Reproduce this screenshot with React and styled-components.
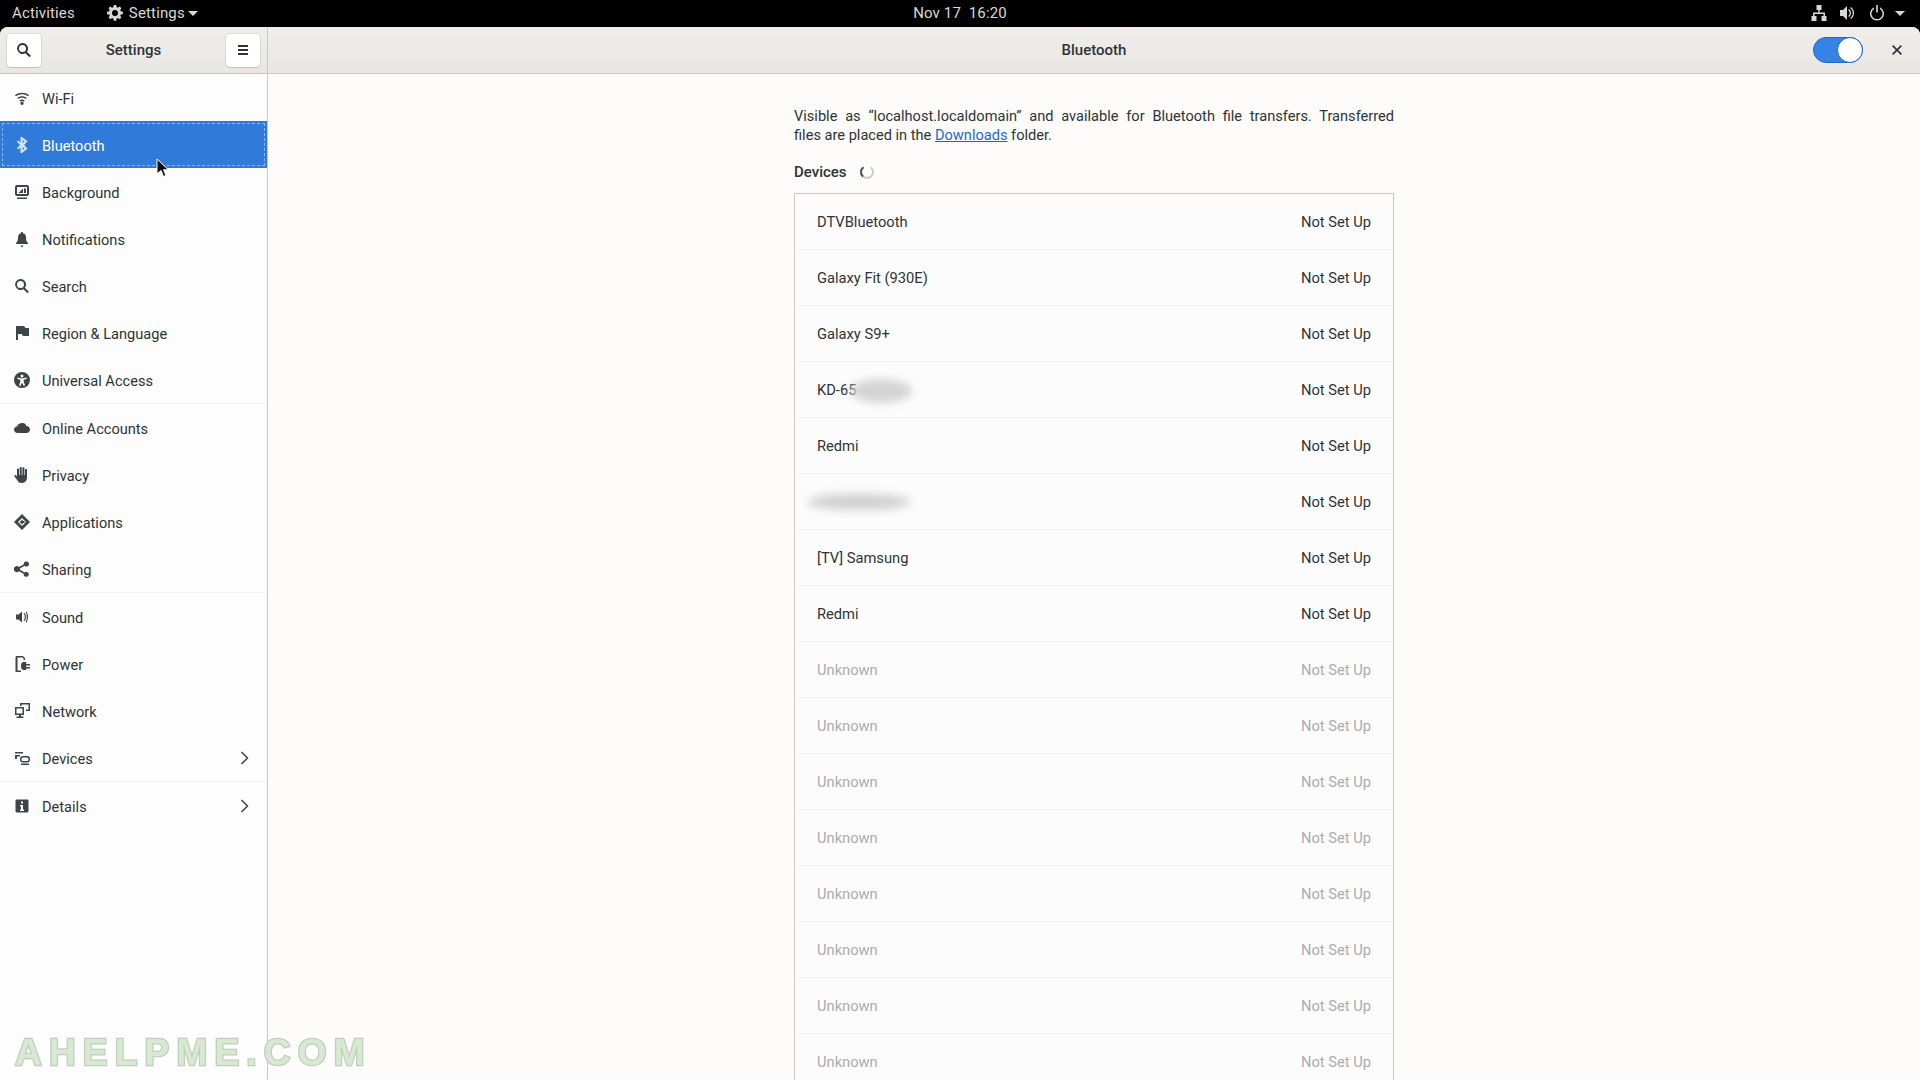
import React from "react";
import styled, { createGlobalStyle } from "styled-components";

const Global = createGlobalStyle`
  html, body { margin: 0; padding: 0; background: #000; }
  body { font-family: Roboto, "Noto Sans", sans-serif; font-size: 15px; color: #2e3436; }
  #root { width: 1920px; height: 1080px; overflow: hidden; }
`;

const Screen = styled.div`
  position: relative;
  width: 1920px;
  height: 1080px;
  display: flex;
  flex-direction: column;
  overflow: hidden;
  background: #000;
`;

const TopBar = styled.div`
  height: 27px;
  flex: none;
  display: grid;
  grid-template-columns: 1fr auto 1fr;
  align-items: center;
  padding: 0 12px 1px;
  box-sizing: border-box;
  color: #d8d8d6;
  font-size: 15px;
  letter-spacing: 0.15px;
`;
const TopLeft = styled.div`
  display: flex;
  align-items: center;
`;
const Activities = styled.span`
  margin-right: 32px;
`;
const AppMenu = styled.span`
  display: flex;
  align-items: center;
  gap: 6px;
`;
const Clock = styled.div`
  word-spacing: 0;
`;
const Tray = styled.div`
  display: flex;
  align-items: center;
  justify-content: flex-end;
  gap: 13px;
  padding-right: 3px;
`;
const TrayArrow = styled.svg`
  width: 10px;
  height: 16px;
  fill: #d8d8d6;
  flex: none;
  margin-left: -3px;
`;

const Window = styled.div`
  flex: 1;
  min-height: 0;
  display: flex;
  flex-direction: column;
  border-radius: 8px 8px 0 0;
  overflow: hidden;
  background: #fdfcfb;
`;
const Header = styled.header`
  height: 47px;
  flex: none;
  display: flex;
  background: linear-gradient(#f0eeeb, #e9e7e3);
  border-bottom: 1px solid #cdc7c2;
  box-sizing: border-box;
`;
const HeaderLeft = styled.div`
  width: 268px;
  flex: none;
  box-sizing: border-box;
  border-right: 1px solid #cdc7c2;
  display: flex;
  align-items: center;
  justify-content: space-between;
  padding: 0 7px;
`;
const HeaderRight = styled.div`
  flex: 1;
  position: relative;
  display: flex;
  align-items: center;
  justify-content: center;
`;
const HeaderTitle = styled.span`
  font-weight: 500;
  font-size: 15px;
  color: #2e3436;
  padding-bottom: 1px;
`;
const ToolButton = styled.div`
  width: 34px;
  height: 33px;
  box-sizing: border-box;
  border-radius: 4px;
  background: #fff;
  box-shadow: 0 1px 1px rgba(0, 0, 0, 0.12), 0 0 0 1px rgba(205, 199, 194, 0.45);
  display: flex;
  align-items: center;
  justify-content: center;
`;
const HeaderActions = styled.div`
  position: absolute;
  right: 0;
  top: 0;
  bottom: 0;
  display: flex;
  align-items: center;
  gap: 24px;
  padding-right: 13px;
`;
const Toggle = styled.div`
  width: 50px;
  height: 26px;
  box-sizing: border-box;
  border-radius: 13px;
  background: #3584e4;
  border: 1px solid #1b6acb;
  position: relative;
`;
const Knob = styled.div`
  position: absolute;
  right: -1px;
  top: -1px;
  width: 26px;
  height: 26px;
  box-sizing: border-box;
  border-radius: 50%;
  background: #fff;
  border: 1px solid #1b6acb;
`;
const CloseBox = styled.div`
  width: 20px;
  height: 20px;
  display: flex;
  align-items: center;
  justify-content: center;
`;

const Body = styled.div`
  flex: 1;
  min-height: 0;
  display: flex;
`;
const Sidebar = styled.nav`
  width: 268px;
  flex: none;
  box-sizing: border-box;
  border-right: 1px solid #cdc7c2;
  background: #fdfdfd;
`;
const NavRow = styled.div`
  height: 47px;
  box-sizing: border-box;
  display: flex;
  align-items: center;
  padding: 0 15px 0 14px;
  gap: 12px;
  color: ${(p) => (p.$active ? "#fff" : "#2e3436")};
  background: ${(p) => (p.$active ? "#307bd9" : "transparent")};
  font-size: 14.6px;
  position: relative;
  ${(p) => (p.$separated ? "border-bottom: 1px solid #f2f1f0; height: 48px;" : "")}
  ${(p) => (p.$active ? "outline: 1px dashed rgba(255,255,255,0.45); outline-offset: -3px;" : "")}
`;
const NavIcon = styled.svg`
  width: 16px;
  height: 16px;
  flex: none;
  fill: ${(p) => (p.$active ? "#cfe3fa" : "#3d4548")};
`;
const NavLabel = styled.span`
  flex: 1;
  padding-top: 2px;
`;
const Chevron = styled.svg`
  width: 16px;
  height: 16px;
  flex: none;
`;

const Main = styled.main`
  flex: 1;
  min-width: 0;
  display: flex;
  justify-content: center;
  background: #fdfcfb;
  overflow: hidden;
`;
const Column = styled.div`
  width: 600px;
  padding-top: 33px;
`;
const Intro = styled.div`
  font-size: 14.6px;
  line-height: 19px;
`;
const IntroFirstLine = styled.div`
  text-align: justify;
  text-align-last: justify;
  white-space: nowrap;
`;
const IntroLink = styled.span`
  color: #1b6acb;
  text-decoration: underline;
`;
const SectionHead = styled.div`
  display: flex;
  align-items: center;
  gap: 12px;
  margin-top: 17px;
  height: 19px;
  font-weight: 500;
  font-size: 15px;
`;
const DeviceList = styled.div`
  margin-top: 12px;
  border: 1px solid #cdc7c2;
  background: #fcfcfc;
`;
const DeviceRow = styled.div`
  height: 56px;
  box-sizing: border-box;
  border-bottom: 1px solid #f5f4f3;
  display: flex;
  align-items: center;
  justify-content: space-between;
  padding: 0 22px;
  font-size: 14.7px;
  color: ${(p) => (p.$dim ? "#a9adae" : "#2e3436")};
  position: relative;
`;
const DeviceName = styled.span`
  position: relative;
`;
const Smudge = styled.div`
  position: absolute;
  left: ${(p) => p.$left}px;
  top: ${(p) => p.$top}px;
  width: ${(p) => p.$w}px;
  height: ${(p) => p.$h}px;
  border-radius: 50%;
  background: ${(p) => p.$color};
  filter: blur(${(p) => p.$blur}px);
`;

const Cursor = styled.svg`
  position: absolute;
  left: 156px;
  top: 158px;
  width: 14px;
  height: 20px;
`;
const Watermark = styled.div`
  position: absolute;
  left: 15px;
  top: 1032px;
  font-family: "Liberation Sans", sans-serif;
  font-weight: 700;
  font-size: 37px;
  line-height: 42px;
  letter-spacing: 7.2px;
  color: #d6e8d0;
  -webkit-text-stroke: 2.5px #bccdb7;
  paint-order: stroke fill;
  opacity: 0.95;
  white-space: nowrap;
`;

const paths = {
  wifi: (
    <>
      <path d="M8 11.500a1.700 1.700 0 1 1 0 3.400 1.700 1.700 0 0 1 0-3.400z" />
      <path d="M1 5.200C3 3.600 5.400 2.800 8 2.800s5 .8 7 2.400l-.9 1.100C12.400 5 10.300 4.200 8 4.200S3.600 5 1.900 6.300z" />
      <path d="M3.200 7.900C4.600 6.900 6.200 6.300 8 6.300s3.400.6 4.800 1.600l-.9 1.100C10.800 8.200 9.500 7.700 8 7.700s-2.800.5-3.900 1.300z" />
      <path d="M5.300 10.400C6.100 9.900 7 9.600 8 9.600s1.900.3 2.700.8l-.9 1.100C9.300 11.200 8.700 11 8 11s-1.300.2-1.800.5z" />
    </>
  ),
  bluetooth: (
    <path fillRule="evenodd" d="M5.500 0h1.500L12.500 4.300 9.200 8l3.300 3.700L7 16H5.500V10.500L3.300 12.600 1.900 11.200 5 8 1.900 4.800l1.400-1.400L5.500 5.500zM7.600 3v3l1.900-1.500zM7.600 10v3l1.900-1.500z" transform="translate(1 0)" />
  ),
  background: (
    <path fillRule="evenodd" d="M3 1h10a2 2 0 0 1 2 2v7a2 2 0 0 1-2 2H3a2 2 0 0 1-2-2V3a2 2 0 0 1 2-2zm0 2v7h10V3zM9 4.500V9H4.500zM10 4.500h2V9h-2zM3 13.500h10V15H3z" />
  ),
  bell: (
    <path d="M8 1c.6 0 1 .4 1 1v.3c2 .5 3 2 3 4.200 0 3 .6 4.200 2 5.500v1H2v-1c1.400-1.300 2-2.500 2-5.500 0-2.200 1-3.700 3-4.200V2c0-.6.400-1 1-1zM6.500 14.500h3C9.300 15.400 8.700 16 8 16s-1.300-.6-1.500-1.500z" />
  ),
  search: (
    <path fillRule="evenodd" d="M6.500 1a5.500 5.500 0 0 1 4.400 8.800l4 4-1.400 1.400-4-4A5.500 5.500 0 1 1 6.500 1zm0 2a3.500 3.500 0 1 0 0 7 3.500 3.500 0 0 0 0-7z" />
  ),
  flag: <path d="M2 1h8l1.500 2H15v8H9l-1.500-2H4v6H2z" />,
  access: (
    <path fillRule="evenodd" d="M8 0a8 8 0 1 1 0 16A8 8 0 0 1 8 0zm0 2.500A1.500 1.500 0 1 0 8 5.500 1.500 1.500 0 0 0 8 2.500zM3.500 5.500l-.4 1.300 3.200 1v2L5 13.500l1.300.5L8 10.500l1.700 3.500 1.300-.5-1.300-3.700v-2l3.200-1-.4-1.300L8 6.500z" />
  ),
  cloud: (
    <path d="M8.500 3a4 4 0 0 1 3.800 3A3.500 3.500 0 0 1 16 9.500c0 1.700-1.400 3.500-3.500 3.500h-9C1.500 13 0 11.500 0 9.700 0 8 1.300 6.700 3 6.500 3.700 4.500 5.500 3 8.500 3z" />
  ),
  hand: (
    <path d="M4 1.500c.6 0 1 .4 1 1V8h.7V1c0-.6.400-1 1-1s1 .4 1 1v7h.7V1.200c0-.6.400-1 1-1s1 .4 1 1V8h.6V3c0-.6.400-1 1-1s1 .4 1 1v7.500c0 3-2 5.500-5 5.500-2.500 0-3.600-.7-4.500-2.500L.5 9.500c-.3-.6 0-1.200.5-1.500s1.100 0 1.400.5L3 9.700V2.500c0-.6.400-1 1-1z" />
  ),
  apps: (
    <path fillRule="evenodd" d="M8 0l8 8-8 8-8-8zM8 4L4 8l4 4 4-4zM8 5.500l1 1.500h1.500v2H9l-1 1.500L6.500 9 5.500 8l1.500-1z" />
  ),
  share: (
    <path d="M12.500 0a2.500 2.500 0 1 1-1.900 4.100L6 6.900c.1.400.1.800 0 1.200l4.600 2.800a2.500 2.500 0 1 1-.8 1.500L5 9.600a3 3 0 1 1 0-4.200l4.800-2.800A2.500 2.500 0 0 1 12.500 0z" transform="translate(0 .6)" />
  ),
  sound: (
    <>
      <path d="M2 5.500h2.500L8 2.500v11l-3.500-3H2z" />
      <path d="M9.500 4.500l.9-.6c1 1.100 1.600 2.500 1.600 4.100s-.6 3-1.600 4.100l-.9-.6c.8-.9 1.300-2.100 1.300-3.500S10.300 5.400 9.500 4.500z" />
      <path d="M11.500 3l.9-.6C13.400 3.900 14 5.900 14 8s-.6 4.100-1.600 5.600l-.9-.6c.9-1.400 1.300-3.100 1.300-5s-.4-3.600-1.300-5z" />
    </>
  ),
  power: (
    <path fillRule="evenodd" d="M3 0h6l2 2v2H9.500V2.200L8.600 1.500H3.500v13H7V16H1.500V1.500C1.500 .6 2.100 0 3 0zM9 6h3.200v2H16v1.500h-3.800V11H16v1.500h-3.800v1.500H9c-1.400-.6-2-1.800-2-3.700V9.500C7 7.700 7.600 6.600 9 6z" />
  ),
  network: (
    <path fillRule="evenodd" d="M1 4h9v8H7v1.500h2.500V15h-7v-1.500H5V12H1zm1.500 1.500v5h6v-5zM6 0h10v8h-4V6.500h2.500V1.500h-7V3H6z" />
  ),
  devices: (
    <path fillRule="evenodd" d="M1 2h8v1.500H1zM1 5h5v1.500H3V9H1zM9 6h4a3 3 0 0 1 3 3v.5a3 3 0 0 1-3 3H9a3 3 0 0 1-3-3V9a3 3 0 0 1 3-3zm0 1.500A1.500 1.500 0 0 0 7.500 9v.5A1.500 1.500 0 0 0 9 11h4a1.500 1.500 0 0 0 1.500-1.500V9A1.500 1.500 0 0 0 13 7.500zM7 13.500h8V15H7z" />
  ),
  info: (
    <path fillRule="evenodd" d="M3 1.500h10c.8 0 1.500.7 1.500 1.500v10c0 .8-.7 1.500-1.500 1.500H3c-.8 0-1.500-.7-1.500-1.500V3c0-.8.7-1.500 1.500-1.500zM7 3.500v2h2v-2zM6 7v1.500h1v3H6V13h4v-1.500H9V7z" />
  ),
};

const navItems = [
  ["wifi", "Wi-Fi"],
  ["bluetooth", "Bluetooth", { active: true }],
  ["background", "Background"],
  ["bell", "Notifications"],
  ["search", "Search"],
  ["flag", "Region & Language"],
  ["access", "Universal Access", { sep: true }],
  ["cloud", "Online Accounts"],
  ["hand", "Privacy"],
  ["apps", "Applications"],
  ["share", "Sharing", { sep: true }],
  ["sound", "Sound"],
  ["power", "Power"],
  ["network", "Network"],
  ["devices", "Devices", { more: true, sep: true }],
  ["info", "Details", { more: true }],
];

const devices = [
  "DTVBluetooth",
  "Galaxy Fit (930E)",
  "Galaxy S9+",
  "KD-65",
  "Redmi",
  "",
  "[TV] Samsung",
  "Redmi",
  ...Array(9).fill("Unknown"),
];

const TrayIcon = styled.svg`
  width: 16px;
  height: 16px;
  fill: ${(p) => p.$fill || "#d8d8d6"};
  flex: none;
`;

export default function App() {
  return (
    <Screen>
      <Global />
      <TopBar>
        <TopLeft>
          <Activities>Activities</Activities>
          <AppMenu>
            <TrayIcon viewBox="0 0 16 16">
              <path fillRule="evenodd" d="M6.800 0h2.400l.4 2.100 1.300.6 1.800-1.200 1.700 1.700-1.200 1.800.6 1.300 2.100.4v2.400l-2.100.4-.6 1.300 1.200 1.800-1.700 1.700-1.800-1.200-1.300.6-.4 2.100H6.800l-.4-2.100-1.300-.6-1.800 1.200-1.700-1.700 1.200-1.800-.6-1.300L0 9.200V6.800l2.100-.4.6-1.300-1.200-1.800 1.700-1.700 1.800 1.200 1.300-.6zM8 5a3 3 0 1 0 0 6 3 3 0 0 0 0-6z" />
            </TrayIcon>
            <span>Settings</span>
            <TrayArrow viewBox="0 0 10 16">
              <path d="M0 6h10L5 11z" />
            </TrayArrow>
          </AppMenu>
        </TopLeft>
        <Clock>Nov 17&nbsp; 16:20</Clock>
        <Tray>
          <TrayIcon viewBox="0 0 16 16">
            <path d="M5.500 0h5v5H8.700v2.500H14V11h1.500v5h-5v-5H12.500V9H3.500v2H5.500v5h-5v-5H2V7.500h5.300V5H5.500z" />
          </TrayIcon>
          <TrayIcon viewBox="0 0 16 16">
            <path d="M0 5h3l4-4v14l-4-4H0z" />
            <path d="M9 4c1.300 1 2 2.400 2 4s-.7 3-2 4l-.8-1c1-.8 1.500-1.800 1.500-3S9.200 5.800 8.200 5z" />
            <path d="M11 2c2 1.500 3 3.600 3 6s-1 4.500-3 6l-.8-1c1.700-1.300 2.500-3 2.500-5s-.8-3.700-2.500-5z" />
          </TrayIcon>
          <TrayIcon viewBox="0 0 16 16">
            <path d="M7.200 0h1.600v7.500H7.200z" />
            <path d="M5 2.300v1.700a5.500 5.500 0 1 0 6 0V2.300a7 7 0 1 1-6 0z" />
          </TrayIcon>
          <TrayArrow viewBox="0 0 10 16">
            <path d="M0 6h10L5 11z" />
          </TrayArrow>
        </Tray>
      </TopBar>
      <Window>
        <Header>
          <HeaderLeft>
            <ToolButton>
              <TrayIcon viewBox="0 0 16 16" $fill="#2e3436">
                {paths.search}
              </TrayIcon>
            </ToolButton>
            <HeaderTitle>Settings</HeaderTitle>
            <ToolButton>
              <TrayIcon viewBox="0 0 16 16" $fill="#2e3436">
                <path d="M3 3h10v2H3zM3 7h10v2H3zM3 11h10v2H3z" />
              </TrayIcon>
            </ToolButton>
          </HeaderLeft>
          <HeaderRight>
            <HeaderTitle>Bluetooth</HeaderTitle>
            <HeaderActions>
              <Toggle>
                <Knob />
              </Toggle>
              <CloseBox>
                <TrayIcon viewBox="0 0 16 16" $fill="#2e3436">
                  <path d="M4.200 3L8 6.800 11.800 3 13 4.200 9.200 8 13 11.800 11.800 13 8 9.200 4.200 13 3 11.800 6.800 8 3 4.200z" />
                </TrayIcon>
              </CloseBox>
            </HeaderActions>
          </HeaderRight>
        </Header>
        <Body>
          <Sidebar>
            {navItems.map(([icon, label, opts = {}]) => (
              <NavRow key={label} $active={opts.active} $separated={opts.sep}>
                <NavIcon viewBox="0 0 16 16" $active={opts.active}>
                  {paths[icon]}
                </NavIcon>
                <NavLabel>{label}</NavLabel>
                {opts.more && (
                  <Chevron viewBox="0 0 16 16">
                    <path d="M5.500 2l6 6-6 6" fill="none" stroke="#3d4548" strokeWidth="1.500" />
                  </Chevron>
                )}
              </NavRow>
            ))}
          </Sidebar>
          <Main>
            <Column>
              <Intro>
                <IntroFirstLine>
                  Visible as “localhost.localdomain” and available for Bluetooth file transfers. Transferred
                </IntroFirstLine>
                files are placed in the <IntroLink>Downloads</IntroLink> folder.
              </Intro>
              <SectionHead>
                <span>Devices</span>
                <svg width="16" height="16" viewBox="0 0 16 16">
                  <path d="M11.800 3.300A6 6 0 1 1 4.200 3.300" fill="none" stroke="#c9cccc" strokeWidth="2" />
                  <path d="M4.500 3.200A6 6 0 0 0 4 12.600" fill="none" stroke="#4b5254" strokeWidth="2" />
                </svg>
              </SectionHead>
              <DeviceList>
                {devices.map((name, i) => (
                  <DeviceRow key={i} $dim={name === "Unknown"}>
                    <DeviceName>
                      {name || "\u00a0"}
                      {name === "KD-65" && <Smudge $left={33} $top={-2} $w={62} $h={24} $color="#d4d4d4" $blur={4} />}
                      {name === "" && <Smudge $left={-10} $top={1} $w={104} $h={16} $color="#cfcfcf" $blur={5} />}
                    </DeviceName>
                    <span>Not Set Up</span>
                  </DeviceRow>
                ))}
              </DeviceList>
            </Column>
          </Main>
        </Body>
      </Window>
      <Cursor viewBox="0 0 14 20">
        <path d="M1 1v15l4-3.500 2.500 6 2.500-1-2.500-5.700H12.500z" fill="#111" stroke="#fff" strokeWidth="1" />
      </Cursor>
      <Watermark>AHELPME.COM</Watermark>
    </Screen>
  );
}
